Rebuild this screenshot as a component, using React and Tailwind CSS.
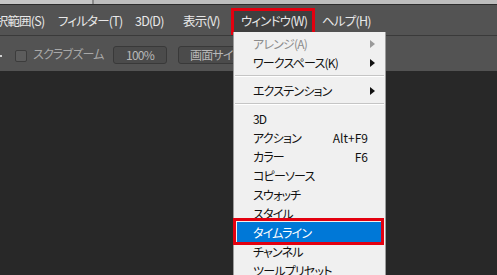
import React from "react";

const menuBar = [
  { label: "選択範囲(S)", cls: "-ml-[16px] w-[74px]" },
  { label: "フィルター(T)", cls: "w-[77px]" },
  { label: "3D(D)", cls: "w-[48px]" },
  { label: "表示(V)", cls: "w-[48px]" },
];

const items = [
  { label: "アレンジ(A)", arrow: true, disabled: true },
  { label: "ワークスペース(K)", arrow: true },
  { sep: true },
  { label: "エクステンション", arrow: true },
  { sep: true },
  { label: "3D" },
  { label: "アクション", key: "Alt+F9" },
  { label: "カラー", key: "F6" },
  { label: "コピーソース" },
  { label: "スウォッチ" },
  { label: "スタイル" },
  { label: "タイムライン", active: true },
  { label: "チャンネル" },
  { label: "ツールプリセット" },
];

const Arrow = ({ disabled }) => (
  <span
    className={
      "block w-0 h-0 border-y-[4px] border-y-transparent border-l-[5px] " +
      (disabled ? "border-l-[#9a9a9a]" : "border-l-[#111]")
    }
  />
);

export default function App() {
  return (
    <div
      className="relative w-[497px] h-[275px] overflow-hidden bg-[#282828] [font-feature-settings:'palt']"
      style={{ fontFamily: '"Noto Sans CJK JP", "Noto Sans", sans-serif' }}
    >
      {/* top strip */}
      <div className="flex h-[4px]">
        <div className="w-[92px] bg-[#c6c6c6]" />
        <div className="w-[2px] bg-[#8a8a8a]" />
        <div className="flex-1 bg-[#bdbdbd]" />
      </div>
      <div className="h-[1px] bg-[#2c2c2c]" />

      {/* menu bar */}
      <div className="flex items-center h-[30px] bg-[#535353] text-[12.5px] tracking-[-0.8px] text-[#e8e8e8] whitespace-nowrap">
        {menuBar.map((m) => (
          <div key={m.label} className={"shrink-0 mt-[3px] " + m.cls}>
            {m.label}
          </div>
        ))}
        <div className="shrink-0 w-[84px] h-[27px] mt-[2px] border-[3px] border-[#e3000f] bg-[#3f3f3f] pl-[7px] pt-[1px] flex items-center">
          ウィンドウ(W)
        </div>
        <div className="shrink-0 ml-[7px] mt-[3px]">ヘルプ(H)</div>
      </div>
      <div className="h-[1px] bg-[#3a3a3a]" />

      {/* options bar */}
      <div className="flex items-center h-[35px] bg-[#535353] text-[12px] tracking-[-0.8px] whitespace-nowrap">
        <div className="shrink-0 w-[2px] h-[2px] bg-[#d0d0d0] mt-[4px]" />
        <div className="shrink-0 ml-[13px] w-[12px] h-[12px] rounded-[2px] bg-[#5c5c5c] border border-[#3c3c3c] mt-[4px]" />
        <div className="shrink-0 w-[79px] pl-[6px] text-[#a8a8a8] mt-[1px]">スクラブズーム</div>
        <div className="shrink-0 ml-[7px] w-[54px] h-[18px] mt-[2px] rounded-[3px] bg-[#4b4b4b] border border-[#393939] text-[#b8b8b8] flex items-center justify-center">
          100%
        </div>
        <div className="shrink-0 ml-[11px] w-[90px] h-[18px] mt-[2px] rounded-[3px] bg-[#4b4b4b] border border-[#393939] text-[#b8b8b8] pl-[11px] flex items-center">
          画面サイズ
        </div>
      </div>

      {/* dropdown */}
      <div className="absolute left-[233px] top-[32px] w-[153px] h-[250px] bg-[#f0f0f0] border-x border-[#9c9c9c] pt-[2px] text-[12px] tracking-[-0.8px] text-[#111] whitespace-nowrap">
        {items.map((it, i) =>
          it.sep ? (
            <div key={i} className="h-[9px] pt-[3px] px-[1px]">
              <div className="h-[1px] bg-[#c5c5c5]" />
              <div className="h-[1px] bg-white" />
            </div>
          ) : (
            <div
              key={i}
              className="relative h-[19px] pl-[19px] pr-[17px] flex items-center justify-between"
            >
              {it.active && (
                <>
                  <div className="absolute left-[3px] right-[4px] top-[-1px] bottom-0 bg-[#0078d7]" />
                  <div className="absolute left-[-1px] right-[1px] top-[-5px] bottom-[-3px] border-[3px] border-[#e3000f]" />
                </>
              )}
              <span
                className={
                  "relative " +
                  (it.disabled ? "text-[#8c8c8c]" : it.active ? "text-white" : "")
                }
              >
                {it.label}
              </span>
              {it.key && <span className="relative tracking-normal">{it.key}</span>}
              {it.arrow && (
                <span className="relative mr-[-7px]">
                  <Arrow disabled={it.disabled} />
                </span>
              )}
            </div>
          )
        )}
      </div>
    </div>
  );
}
